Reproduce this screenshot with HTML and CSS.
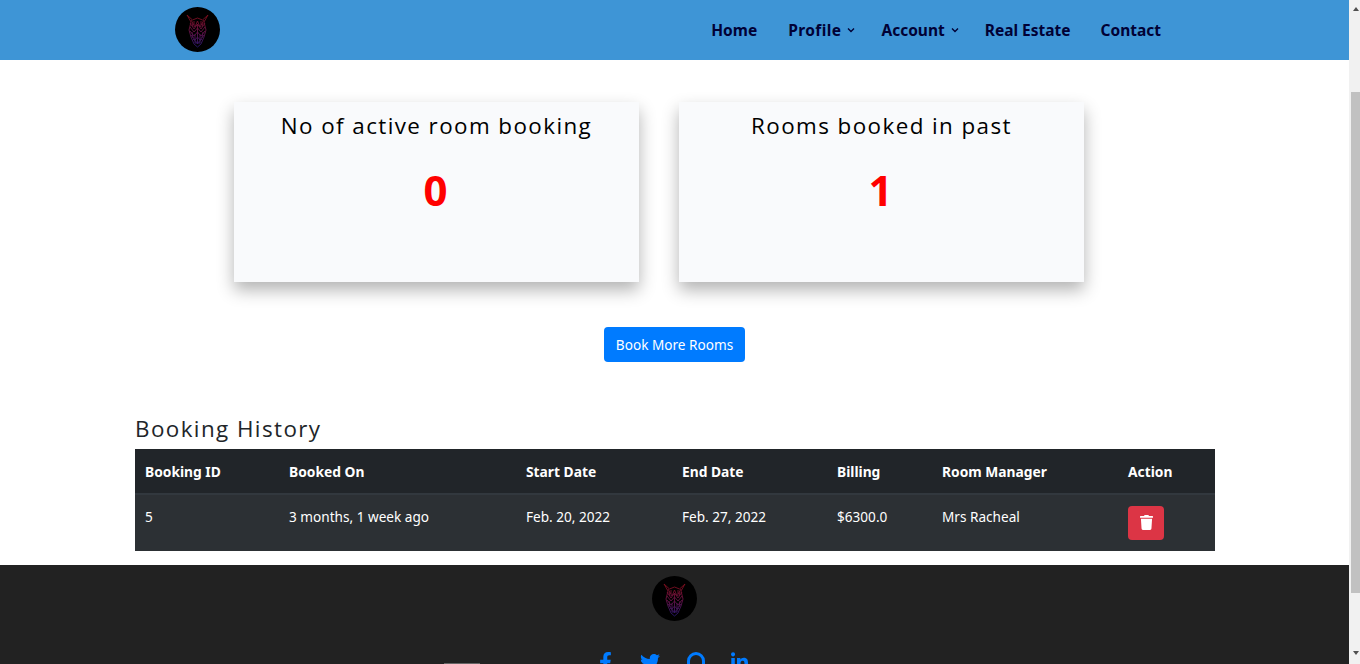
FILE: index.html
```html
<!DOCTYPE html>
<html lang="en">
<head>
<meta charset="utf-8">
<title>Dashboard</title>
<link rel="stylesheet" href="styles.css">
</head>
<body>
<svg class="defs" width="0" height="0" aria-hidden="true">
  <defs>
    <linearGradient id="wolf" gradientUnits="userSpaceOnUse" x1="0" y1="9" x2="0" y2="41">
      <stop offset="0" stop-color="#b01428"/>
      <stop offset="0.5" stop-color="#8a1a62"/>
      <stop offset="1" stop-color="#3322a0"/>
    </linearGradient>
    <symbol id="logo" viewBox="0 0 45 45">
      <circle cx="22.5" cy="22.5" r="22.5" fill="#000"/>
      <g fill="none" stroke="url(#wolf)" stroke-width="0.9" opacity="0.72">
        <path d="M12 8 L16 15 L14 23 L16 30 L19 37 L22.5 40 L26 37 L29 30 L31 23 L29 15 L33 8 L27.5 13 L22.5 11 L17.5 13 Z"/>
        <path d="M16 13 L20 20 L22.5 14 L25 20 L29 13 M15 16 L19 22 L22.5 17 L26 22 L30 16 M15 20 L19 25 L22.5 21 L26 25 L30 20 M15 24 L19 29 L22.5 25 L26 29 L30 24 M16 28 L20 33 L22.5 30 L25 33 L29 28 M18 32 L22.5 36 L27 32 M22.5 17 V37"/>
        <path d="M17 16 L18 20 M28 16 L27 20 M17 25 L18 31 M28 25 L27 31 M20 36 H25 M19 14 L19 18 M26 14 L26 18 M20 27 L20 36 M25 27 L25 36"/>
      </g>
    </symbol>
    <symbol id="ic-fb" viewBox="0 0 320 512"><path fill="currentColor" d="M279.14 288l14.22-92.66h-88.91v-60.13c0-25.35 12.42-50.06 52.24-50.06h40.42V6.26S260.43 0 225.36 0c-73.22 0-121.08 44.38-121.08 124.72v70.62H22.89V288h81.39v224h100.17V288z"/></symbol>
    <symbol id="ic-tw" viewBox="0 0 512 512"><path fill="currentColor" d="M459.37 151.716c.325 4.548.325 9.097.325 13.645 0 138.72-105.583 298.558-298.558 298.558-59.452 0-114.68-17.219-161.137-47.106 8.447.974 16.568 1.299 25.34 1.299 49.055 0 94.213-16.568 130.274-44.832-46.132-.975-84.792-31.188-98.112-72.772 6.498.974 12.995 1.624 19.818 1.624 9.421 0 18.843-1.3 27.614-3.573-48.081-9.747-84.143-51.98-84.143-102.985v-1.299c13.969 7.797 30.214 12.67 47.431 13.319-28.264-18.843-46.781-51.005-46.781-87.391 0-19.492 5.197-37.36 14.294-52.954 51.655 63.675 129.3 105.258 216.365 109.807-1.624-7.797-2.599-15.918-2.599-24.04 0-57.828 46.782-104.934 104.934-104.934 30.213 0 57.502 12.67 76.67 33.137 23.715-4.548 46.456-13.32 66.599-25.34-7.798 24.366-24.366 44.833-46.132 57.827 21.117-2.273 41.584-8.122 60.426-16.243-14.292 20.791-32.161 39.308-52.628 54.253z"/></symbol>
    <symbol id="ic-in" viewBox="0 0 448 512"><path fill="currentColor" d="M100.28 448H7.4V148.9h92.88zM53.79 108.1C24.09 108.1 0 83.5 0 53.8a53.79 53.79 0 0 1 107.58 0c0 29.7-24.1 54.3-53.79 54.3zM447.9 448h-92.68V302.4c0-34.7-.7-79.2-48.29-79.2-48.29 0-55.69 37.7-55.69 76.7V448h-92.78V148.9h89.08v40.8h1.3c12.4-23.5 42.69-48.3 87.88-48.3 94 0 111.28 61.9 111.28 142.3V448z"/></symbol>
  </defs>
</svg>
<div class="window">
  <div class="page">
    <nav class="nav">
      <svg class="logo"><use href="#logo"/></svg>
      <ul class="menu">
        <li><a href="#">Home</a></li>
        <li class="gap-profile"><a href="#">Profile</a><svg class="caret" viewBox="0 0 8 6"><path d="M1 1.5 L4 4.5 L7 1.5" fill="none" stroke="currentColor" stroke-width="1.4"/></svg></li>
        <li class="gap-account"><a href="#">Account</a><svg class="caret" viewBox="0 0 8 6"><path d="M1 1.5 L4 4.5 L7 1.5" fill="none" stroke="currentColor" stroke-width="1.4"/></svg></li>
        <li class="gap-real"><a href="#">Real Estate</a></li>
        <li class="gap-contact"><a href="#">Contact</a></li>
      </ul>
    </nav>
    <main class="container">
      <section class="cards">
        <article class="card">
          <h3 class="card-title">No of active room booking</h3>
          <p class="card-num">0</p>
        </article>
        <article class="card">
          <h3 class="card-title">Rooms booked in past</h3>
          <p class="card-num">1</p>
        </article>
      </section>
      <div class="cta"><a class="btn" href="#">Book More Rooms</a></div>
      <h4 class="history">Booking History</h4>
      <table class="table">
        <colgroup>
          <col class="c1"><col class="c2"><col class="c3"><col class="c4"><col class="c5"><col class="c6"><col class="c7">
        </colgroup>
        <thead>
          <tr><th>Booking ID</th><th>Booked On</th><th>Start Date</th><th>End Date</th><th>Billing</th><th>Room Manager</th><th>Action</th></tr>
        </thead>
        <tbody>
          <tr>
            <td>5</td><td>3 months, 1 week ago</td><td>Feb. 20, 2022</td><td>Feb. 27, 2022</td><td>$6300.0</td><td>Mrs Racheal</td>
            <td class="action"><button class="del" type="button" aria-label="Delete"><svg class="trash" viewBox="0 0 448 512"><path fill="currentColor" d="M432 32H312l-9.4-18.7A24 24 0 0 0 281.1 0H166.8a23.72 23.72 0 0 0-21.4 13.3L136 32H16A16 16 0 0 0 0 48v32a16 16 0 0 0 16 16h416a16 16 0 0 0 16-16V48a16 16 0 0 0-16-16zM53.2 467a48 48 0 0 0 47.9 45h245.8a48 48 0 0 0 47.9-45L416 128H32z"/></svg></button></td>
          </tr>
        </tbody>
      </table>
    </main>
    <footer class="footer">
      <svg class="logo"><use href="#logo"/></svg>
      <div class="social">
        <svg class="si si-fb"><use href="#ic-fb"/></svg>
        <svg class="si si-tw"><use href="#ic-tw"/></svg>
        <svg class="si si-gh" viewBox="0 0 18 18"><path d="M1.5 18 V9 A7.5 7.5 0 0 1 16.5 9 V18" fill="none" stroke="currentColor" stroke-width="3"/></svg>
        <svg class="si si-in"><use href="#ic-in"/></svg>
      </div>
      <div class="foot-line"></div>
    </footer>
  </div>
  <div class="scrollbar" aria-hidden="true">
    <span class="arrow arrow-up"></span>
    <span class="thumb"></span>
    <span class="arrow arrow-down"></span>
  </div>
</div>
</body>
</html>
```

FILE: styles.css
```css
* { box-sizing: border-box; }
html, body { margin: 0; height: 664px; overflow: hidden; }
body { font-family: "Noto Sans", "Open Sans", sans-serif; font-size: 13.6px; color: #212529; background: #fff; }
.defs { display: block; height: 0; }
.window { display: flex; height: 664px; }
.page { width: 1349px; height: 664px; overflow: hidden; flex: none; }

.nav { height: 60px; background: #3e95d6; display: flex; align-items: flex-start; padding: 7px 188px 0 175px; }
.logo { width: 45px; height: 45px; display: block; flex: none; }
.menu { margin: 0 0 0 auto; padding: 0; list-style: none; display: flex; height: 46px; align-items: center; font-size: 15.5px; font-weight: 700; color: #010135; }
.menu li { display: flex; align-items: center; margin-left: 31px; }
.menu a { color: inherit; text-decoration: none; }
.caret { width: 8px; height: 6px; margin-left: 6px; }
.menu .gap-profile a { letter-spacing: .4px; }
.menu .gap-account { margin-left: 26px; }
.menu .gap-real { margin-left: 26px; }
.menu .gap-contact { margin-left: 30px; }

.container { width: 1080px; margin-left: 135px; }
.cards { display: flex; gap: 40px; padding: 42px 0 0 99px; }
.card { width: 405px; height: 180px; background: #f9fafc; box-shadow: 0 8px 16px rgba(0,0,0,.3); text-align: center; }
.card-title { margin: 9px 0 0; font-family: "Open Sans", sans-serif; font-size: 22.4px; line-height: 30px; font-weight: 500; letter-spacing: 1.42px; color: #000; }
.card-num { margin: 19px 0 0; padding-right: 2px; font-family: "Open Sans", sans-serif; font-size: 42px; line-height: 60px; font-weight: 700; color: #f00; }

.cta { display: flex; justify-content: center; padding: 45px 1px 0 0; }
.btn { display: block; width: 141px; height: 35px; line-height: 35px; text-align: center; background: #007bff; color: #fff; border-radius: 4px; text-decoration: none; font-size: 13.6px; }

.history { margin: 52px 0 0; height: 35px; font-family: "Open Sans", sans-serif; font-size: 22.4px; line-height: 30px; font-weight: 500; letter-spacing: 1.42px; color: #212529; }

.table { width: 1080px; border-collapse: collapse; table-layout: fixed; color: #fff; background: #2c3034; }
.c1 { width: 144px; } .c2 { width: 237px; } .c3 { width: 156px; } .c4 { width: 155px; }
.c5 { width: 105px; } .c6 { width: 186px; } .c7 { width: 97px; }
.table th { height: 45px; padding: 1px 10px 0; background: #212529; text-align: left; font-size: 13.8px; font-weight: 700; border-bottom: 2px solid #32383e; }
.table td { height: 57px; padding: 0 10px 13px; vertical-align: middle; }
.table td.action { padding: 0 10px 1px; }
.del { display: flex; align-items: center; justify-content: center; width: 36px; height: 34px; padding: 0; border: 0; border-radius: 4px; background: #dc3545; color: #fff; }
.trash { width: 13px; height: 15px; }

.footer { margin-top: 14px; height: 99px; background: #222; display: flex; flex-direction: column; align-items: center; padding-top: 11px; position: relative; }
.social { display: flex; align-items: flex-start; margin-top: 31px; color: #007bff; height: 22px; }
.si { display: block; height: 20px; flex: none; }
.si-fb { width: 13px; margin-right: 27.5px; margin-left: -2px; }
.si-tw { width: 20px; margin-right: 27px; }
.si-gh { width: 18px; height: 18px; margin-right: 26px; }
.si-in { width: 17px; }
.foot-line { position: absolute; left: 444px; top: 98px; width: 36px; height: 1px; background: #666; }

.scrollbar { width: 11px; flex: none; height: 664px; background: #f1f1f1; display: flex; flex-direction: column; align-items: flex-end; }
.arrow { display: block; width: 0; height: 0; border-left: 3.5px solid transparent; border-right: 3.5px solid transparent; margin-right: 1px; }
.arrow-up { border-bottom: 4px solid #505050; margin-top: 7px; }
.thumb { display: block; width: 9px; height: 501px; background: #c1c1c1; margin-top: 81px; }
.arrow-down { border-top: 4px solid #505050; margin-top: 58px; }
```
